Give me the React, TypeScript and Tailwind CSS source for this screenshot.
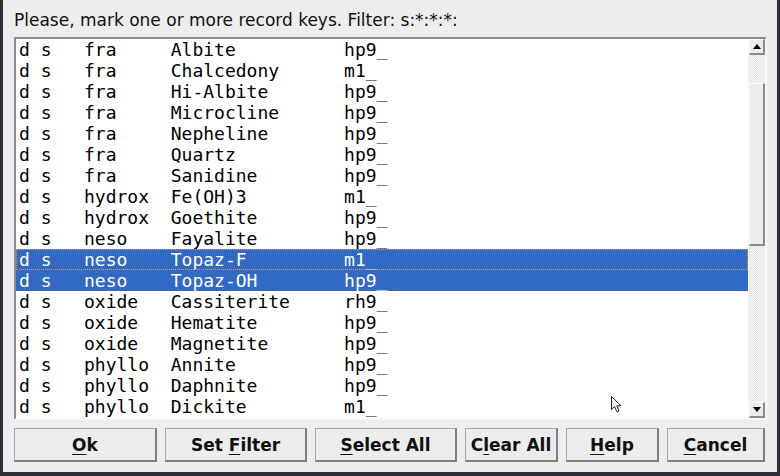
const rows: [string, string, string, string][] = [
  ["fra", "Albite", "hp9_", ""],
  ["fra", "Chalcedony", "m1_", ""],
  ["fra", "Hi-Albite", "hp9_", ""],
  ["fra", "Microcline", "hp9_", ""],
  ["fra", "Nepheline", "hp9_", ""],
  ["fra", "Quartz", "hp9_", ""],
  ["fra", "Sanidine", "hp9_", ""],
  ["hydrox", "Fe(OH)3", "m1_", ""],
  ["hydrox", "Goethite", "hp9_", ""],
  ["neso", "Fayalite", "hp9_", ""],
  ["neso", "Topaz-F", "m1_", "sel focus"],
  ["neso", "Topaz-OH", "hp9_", "sel"],
  ["oxide", "Cassiterite", "rh9_", ""],
  ["oxide", "Hematite", "hp9_", ""],
  ["oxide", "Magnetite", "hp9_", ""],
  ["phyllo", "Annite", "hp9_", ""],
  ["phyllo", "Daphnite", "hp9_", ""],
  ["phyllo", "Dickite", "m1_", ""],
];

const pad = (s: string, n: number) => s + " ".repeat(Math.max(0, n - s.length));

const buttons: { pre: string; key: string; post: string; w: string }[] = [
  { pre: "", key: "O", post: "k", w: "w-[143px]" },
  { pre: "Set ", key: "F", post: "ilter", w: "w-[142px]" },
  { pre: "", key: "S", post: "elect All", w: "w-[142px]" },
  { pre: "C", key: "l", post: "ear All", w: "w-[93px]" },
  { pre: "", key: "H", post: "elp", w: "w-[93px]" },
  { pre: "", key: "C", post: "ancel", w: "w-[98px]" },
];

const ArrowBtn = ({ down }: { down?: boolean }) => (
  <div className="h-[16px] w-[16px] bg-[#ececec] border-t border-l border-white border-r-2 border-b-2 border-r-[#8a8a8a] border-b-[#8a8a8a] flex items-center justify-center">
    <svg width="8" height="5" viewBox="0 0 8 5">
      {down ? (
        <polygon points="0,0 8,0 4,5" fill="#000" />
      ) : (
        <polygon points="0,5 8,5 4,0" fill="#000" />
      )}
    </svg>
  </div>
);

const trough =
  "bg-[repeating-conic-gradient(#e4e4e4_0_25%,#f7f7f7_0_50%)] bg-[length:2px_2px]";

export default function App() {
  return (
    <div className="relative w-[780px] h-[476px] bg-[#2c2f36] pl-[3px] pr-[3px] pb-[4px]">
      <div className="h-full bg-[#ededed] flex flex-col">
        <div className="h-[37px] pl-[11px] pt-[10px] text-[17px] leading-[20px] text-[#111] font-['DejaVu_Sans',sans-serif]">
          Please, mark one or more record keys. Filter: s:*:*:*:
        </div>

        <div className="ml-[11px] mr-[10px] flex border-t-2 border-l-2 border-[#8c8c8c] border-r-2 border-b-2 border-r-[#f8f8f8] border-b-[#f8f8f8]">
          <div className="flex-1 bg-white h-[379px] overflow-hidden font-['DejaVu_Sans_Mono',monospace] text-[18px]">
            {rows.map(([cls, name, model, st]) => (
              <div
                key={name}
                className={
                  "h-[21px] leading-[21px] pl-[3px] whitespace-pre " +
                  (st.includes("sel") ? "bg-[#3169c4] text-white " : "text-black ") +
                  (st.includes("focus")
                    ? "outline-1 outline-dotted outline-[#e0a040] -outline-offset-1"
                    : "")
                }
              >
                {"d s   " + pad(cls, 8) + pad(name, 16) + model}
              </div>
            ))}
          </div>
          <div className="w-[17px] flex flex-col border-l border-[#f4f4f4]">
            <ArrowBtn />
            <div className={"h-[28px] " + trough} />
            <div className="h-[163px] bg-[#ececec] border-t border-l border-white border-r-2 border-b-2 border-r-[#8a8a8a] border-b-[#8a8a8a]" />
            <div className={"flex-1 " + trough} />
            <ArrowBtn down />
          </div>
        </div>

        <div className="flex gap-[8px] ml-[11px] mt-[8px]">
          {buttons.map((b) => (
            <div
              key={b.pre + b.key + b.post}
              className={
                b.w +
                " h-[34px] pt-[2px] bg-[#ececec] border border-[#a8a8a8] border-r-2 border-b-2 border-r-[#808080] border-b-[#808080] flex items-center justify-center font-['DejaVu_Sans',sans-serif] font-bold text-[17px] text-[#111]"
              }
            >
              <span className="whitespace-pre">
                {b.pre}
                <span className="underline underline-offset-[3px] decoration-1">{b.key}</span>
                {b.post}
              </span>
            </div>
          ))}
        </div>
      </div>

      <svg
        className="absolute left-[610px] top-[395px]"
        width="13"
        height="19"
        viewBox="0 0 13 19"
      >
        <path
          d="M1.5 1.5 L1.5 14.5 L4.5 11.5 L7 17 L9 16 L6.8 10.8 L11 10.8 Z"
          fill="#fff"
          stroke="#222"
          strokeWidth="1"
          strokeLinejoin="round"
        />
      </svg>
    </div>
  );
}
